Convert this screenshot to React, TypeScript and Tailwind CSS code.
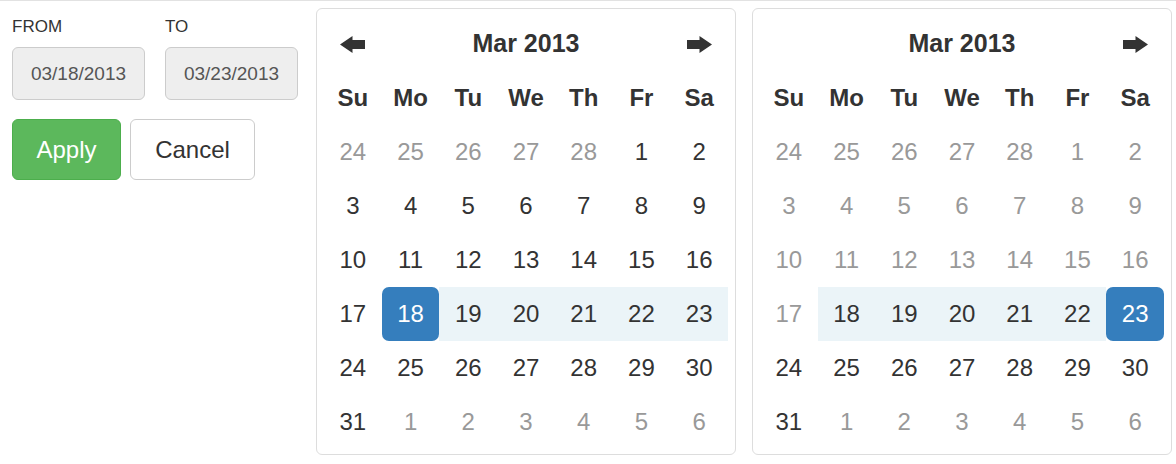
const FONT = { fontFamily: '"Liberation Sans", Arial, sans-serif' }

const WEEKDAYS = ['Su', 'Mo', 'Tu', 'We', 'Th', 'Fr', 'Sa']

type Day = { n: number; month: 'prev' | 'cur' | 'next' }

// March 2013 starts on a Friday
const weeks: Day[][] = (() => {
  const days: Day[] = []
  for (let n = 24; n <= 28; n++) days.push({ n, month: 'prev' })
  for (let n = 1; n <= 31; n++) days.push({ n, month: 'cur' })
  for (let n = 1; n <= 6; n++) days.push({ n, month: 'next' })
  const rows: Day[][] = []
  for (let i = 0; i < days.length; i += 7) rows.push(days.slice(i, i + 7))
  return rows
})()

function Arrow({ dir }: { dir: 'left' | 'right' }) {
  return (
    <svg width="25" height="17" viewBox="0 0 25 17" className={dir === 'right' ? 'rotate-180' : ''}>
      <path d="M0 8.5 L12.5 0 V4 H25 V13 H12.5 V17 Z" fill="#333" />
    </svg>
  )
}

function Calendar({
  selected,
  rangeFrom,
  rangeTo,
  minDay,
  showPrev,
}: {
  selected: number
  rangeFrom: number
  rangeTo: number
  minDay: number
  showPrev: boolean
}) {
  return (
    <div className="w-[420px] rounded-[6px] border border-[#ddd] bg-white px-[7px] pt-[8px] pb-[5px]">
      <div className="grid grid-cols-7">
        <div className="flex h-[54px] items-center justify-center">{showPrev && <Arrow dir="left" />}</div>
        <div className="col-span-5 flex h-[54px] items-center justify-center text-[25px] font-bold text-[#333]">
          Mar 2013
        </div>
        <div className="flex h-[54px] items-center justify-center">
          <Arrow dir="right" />
        </div>
        {WEEKDAYS.map((w) => (
          <div key={w} className="flex h-[54px] items-center justify-center text-[24px] font-bold text-[#333]">
            {w}
          </div>
        ))}
        {weeks.flat().map((d, i) => {
          const cur = d.month === 'cur'
          const isSel = cur && d.n === selected
          const inRange = cur && d.n >= rangeFrom && d.n <= rangeTo && !isSel
          const off = !cur || d.n < minDay
          let cls = 'text-[#333]'
          if (off) cls = 'text-[#999]'
          if (inRange) cls = 'bg-[#ebf4f8] text-[#333]'
          if (isSel) cls = 'rounded-[7px] bg-[#357ebd] text-white'
          return (
            <div key={i} className={`flex h-[54px] items-center justify-center text-[24px] ${cls}`}>
              {d.n}
            </div>
          )
        })}
      </div>
    </div>
  )
}

function DateField({ label, value }: { label: string; value: string }) {
  return (
    <div className="flex w-[133px] flex-col">
      <span className="mb-[10px] text-[17px] leading-[20px] text-[#333]">{label}</span>
      <div className="flex h-[53px] items-center justify-center rounded-[6px] border border-[#ccc] bg-[#eee] pt-[1px] text-[19px] text-[#555]">
        {value}
      </div>
    </div>
  )
}

export default function App() {
  return (
    <div
      style={FONT}
      className="flex h-[464px] w-[1176px] items-start border-t border-[#e2e2e2] bg-white pl-[12px] pt-[7px]"
    >
      <div className="w-[304px] shrink-0 pt-[9px]">
        <div className="flex gap-[20px]">
          <DateField label="FROM" value="03/18/2013" />
          <DateField label="TO" value="03/23/2013" />
        </div>
        <div className="mt-[19px] flex gap-[9px]">
          <button
            type="button"
            className="h-[61px] w-[109px] rounded-[6px] border border-[#4cae4c] bg-[#5cb85c] text-[24px] text-white"
          >
            Apply
          </button>
          <button
            type="button"
            className="h-[61px] w-[125px] rounded-[6px] border border-[#ccc] bg-white text-[24px] text-[#333]"
          >
            Cancel
          </button>
        </div>
      </div>
      <div className="flex gap-[16px]">
        <Calendar selected={18} rangeFrom={18} rangeTo={23} minDay={0} showPrev />
        <Calendar selected={23} rangeFrom={18} rangeTo={23} minDay={18} showPrev={false} />
      </div>
    </div>
  )
}
